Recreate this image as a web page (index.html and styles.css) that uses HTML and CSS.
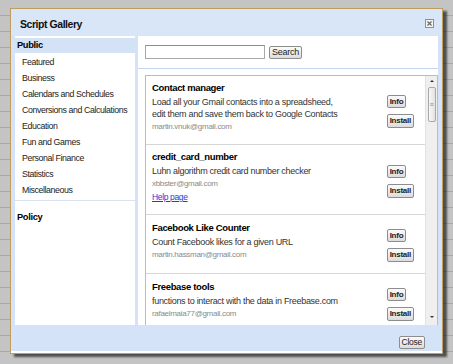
FILE: index.html
```html
<!DOCTYPE html>
<html>
<head>
    <meta charset="UTF-8">
    <title>Script Gallery</title>
    <link rel="stylesheet" href="styles.css">
</head>
<body>
    <div class="dialog">
        <div class="titlebar">
            <span class="title">Script Gallery</span>
            <span class="close-x">
                <svg width="9" height="9" viewBox="0 0 9 9">
                    <rect x="0.5" y="0.5" width="8" height="8" fill="#f2f2f2" stroke="#8f8f8f"/>
                    <path d="M2.5 2.5 L6.5 6.5 M6.5 2.5 L2.5 6.5" stroke="#6a6a6a" stroke-width="1.2"/>
                </svg>
            </span>
        </div>

        <div class="panes">
            <div class="sidebar">
                <div class="cat-head active">Public</div>
                <ul class="cats">
                    <li>Featured</li>
                    <li>Business</li>
                    <li>Calendars and Schedules</li>
                    <li>Conversions and Calculations</li>
                    <li>Education</li>
                    <li>Fun and Games</li>
                    <li>Personal Finance</li>
                    <li>Statistics</li>
                    <li>Miscellaneous</li>
                </ul>
                <div class="cat-head policy">Policy</div>
            </div>

            <div class="main">
                <div class="searchbar">
                    <input class="search-input" type="text">
                    <button class="btn btn-search">Search</button>
                </div>

                <div class="results">
                    <div class="result-list">
                        <div class="script">
                            <div class="script-text">
                                <div class="script-name">Contact manager</div>
                                <div class="script-desc">Load all your Gmail contacts into a spreadsheed,<br>edit them and save them back to Google Contacts</div>
                                <div class="script-author">martin.vnuk@gmail.com</div>
                            </div>
                            <div class="script-actions">
                                <button class="btn btn-small">Info</button>
                                <button class="btn btn-small btn-install">Install</button>
                            </div>
                        </div>

                        <div class="script">
                            <div class="script-text">
                                <div class="script-name">credit_card_number</div>
                                <div class="script-desc">Luhn algorithm credit card number checker</div>
                                <div class="script-author">xbbster@gmail.com</div>
                                <div class="script-help"><a href="#">Help page</a></div>
                            </div>
                            <div class="script-actions">
                                <button class="btn btn-small">Info</button>
                                <button class="btn btn-small btn-install">Install</button>
                            </div>
                        </div>

                        <div class="script">
                            <div class="script-text">
                                <div class="script-name">Facebook Like Counter</div>
                                <div class="script-desc">Count Facebook likes for a given URL</div>
                                <div class="script-author">martin.hassman@gmail.com</div>
                            </div>
                            <div class="script-actions">
                                <button class="btn btn-small">Info</button>
                                <button class="btn btn-small btn-install">Install</button>
                            </div>
                        </div>

                        <div class="script">
                            <div class="script-text">
                                <div class="script-name">Freebase tools</div>
                                <div class="script-desc">functions to interact with the data in Freebase.com</div>
                                <div class="script-author">rafaelmaia77@gmail.com</div>
                            </div>
                            <div class="script-actions">
                                <button class="btn btn-small">Info</button>
                                <button class="btn btn-small btn-install">Install</button>
                            </div>
                        </div>
                    </div>

                    <div class="scrollbar">
                        <span class="arrow-up"></span>
                        <span class="thumb">≡</span>
                        <span class="arrow-down"></span>
                    </div>
                </div>
            </div>
        </div>

        <div class="footer">
            <button class="btn btn-close">Close</button>
        </div>
    </div>
</body>
</html>
```

FILE: styles.css
```css
body {
    margin: 0;
    padding: 8px 0 0 10px;
    height: 364px;
    box-sizing: border-box;
    overflow: hidden;
    font-family: "Liberation Sans", Arial, sans-serif;
    background-color: #c4c4c4;
    background-image: repeating-linear-gradient(to bottom, transparent 0, transparent 15px, #a8a8a8 15px, #a8a8a8 16px);
}
.dialog {
    width: 431px;
    border: 1px solid #bd9e5f;
    background: #d4e3f7;
    box-shadow: 4px 3px 2px rgba(40,40,40,0.75);
    display: flex;
    flex-direction: column;
}
.titlebar {
    height: 27px;
    box-sizing: border-box;
    padding: 2px 8px 0 9px;
    display: flex;
    align-items: center;
    background: #d9e6f8;
}
.title {
    font-weight: bold;
    font-size: 10.5px;
    letter-spacing: -0.45px;
    color: #111;
}
.close-x {
    margin-left: auto;
    width: 9px;
    height: 9px;
    display: flex;
}
.panes {
    display: flex;
    gap: 3px;
    padding: 0 4px;
    height: 289px;
}
.sidebar {
    width: 120px;
    background: #fff;
    padding-top: 2px;
    box-sizing: border-box;
}
.cat-head {
    font-weight: bold;
    font-size: 9.3px;
    letter-spacing: -0.35px;
    height: 15px;
    line-height: 15px;
    padding-left: 2px;
    color: #000;
}
.cat-head.active {
    background: #d3e2f5;
}
.cats {
    list-style: none;
    margin: 0;
    padding: 1px 0 2px;
    border-bottom: 1px solid #d9e3ef;
}
.cats li {
    height: 16px;
    line-height: 16px;
    padding-left: 7px;
    font-size: 8.8px;
    letter-spacing: -0.4px;
    color: #222;
}
.policy {
    margin-top: 8px;
    height: 16px;
    line-height: 16px;
}
.main {
    flex: 1;
    background: #fff;
    display: flex;
    flex-direction: column;
    overflow: hidden;
}
.searchbar {
    display: flex;
    align-items: center;
    gap: 4px;
    padding: 9px 0 9px 7px;
    border-bottom: 1px solid #c5d7ee;
}
.search-input {
    width: 120px;
    height: 14px;
    box-sizing: border-box;
    margin: 0;
    padding: 0;
    border: 1px solid #a8a8a8;
    border-top-color: #8c8c8c;
}
.btn {
    font-family: inherit;
    font-size: 8.5px;
    letter-spacing: -0.25px;
    height: 14px;
    line-height: 12px;
    margin: 0;
    padding: 0 2px;
    border: 1px solid #8d8d8d;
    border-radius: 2px;
    background: linear-gradient(#fbfbfb, #dcdcdc);
    color: #222;
}
.btn-search {
    font-size: 9px;
    height: 13px;
    line-height: 11px;
}
.btn-close {
    height: 13px;
    line-height: 11px;
}
.btn-small {
    font-weight: bold;
    font-size: 8px;
    height: 13px;
    line-height: 11px;
}
.btn-install {
    height: 14px;
    line-height: 12px;
}
.results {
    flex: 1;
    min-height: 0;
    margin: 6px 0 0 7px;
    border: 1px solid #bcbcbc;
    border-bottom: none;
    display: flex;
    overflow: hidden;
}
.result-list {
    flex: 1;
}
.script {
    display: flex;
    align-items: center;
    padding: 6px 11px 11px 6px;
    border-bottom: 1px solid #d6d6d6;
}
.script-text {
    flex: 1;
}
.script-name {
    font-weight: bold;
    font-size: 9.5px;
    letter-spacing: -0.35px;
    line-height: 12px;
    color: #000;
}
.script-desc {
    margin-top: 2px;
    font-size: 9px;
    letter-spacing: -0.3px;
    line-height: 12px;
    color: #333;
}
.script-author {
    margin-top: 1px;
    font-size: 8px;
    letter-spacing: -0.3px;
    line-height: 12px;
    color: #8a8a8a;
}
.script-help {
    margin-top: 1px;
    font-size: 8.5px;
    letter-spacing: -0.35px;
    line-height: 12px;
}
.script-help a {
    color: #3434d4;
}
.script-actions {
    display: flex;
    flex-direction: column;
    align-items: flex-start;
    gap: 6px;
    padding-top: 8px;
}
.scrollbar {
    width: 11px;
    background: #efefef;
    border-left: 1px solid #e2e2e2;
    display: flex;
    flex-direction: column;
    align-items: center;
}
.arrow-up {
    margin-top: 4px;
    width: 0;
    height: 0;
    border-left: 2px solid transparent;
    border-right: 2px solid transparent;
    border-bottom: 2px solid #333;
}
.thumb {
    margin-top: 5px;
    width: 8px;
    height: 35px;
    box-sizing: border-box;
    border: 1px solid #a9a9a9;
    border-radius: 2px;
    background: linear-gradient(to right, #f8f8f8, #e2e2e2);
    font-size: 7px;
    color: #888;
    display: flex;
    align-items: center;
    justify-content: center;
}
.arrow-down {
    margin-top: auto;
    margin-bottom: 7px;
    width: 0;
    height: 0;
    border-left: 2px solid transparent;
    border-right: 2px solid transparent;
    border-top: 2px solid #333;
}
.footer {
    height: 28px;
    box-sizing: border-box;
    padding: 11px 17px 0 0;
    display: flex;
    justify-content: flex-end;
    align-items: flex-start;
    border-bottom: 2px solid #fff;
}
```
